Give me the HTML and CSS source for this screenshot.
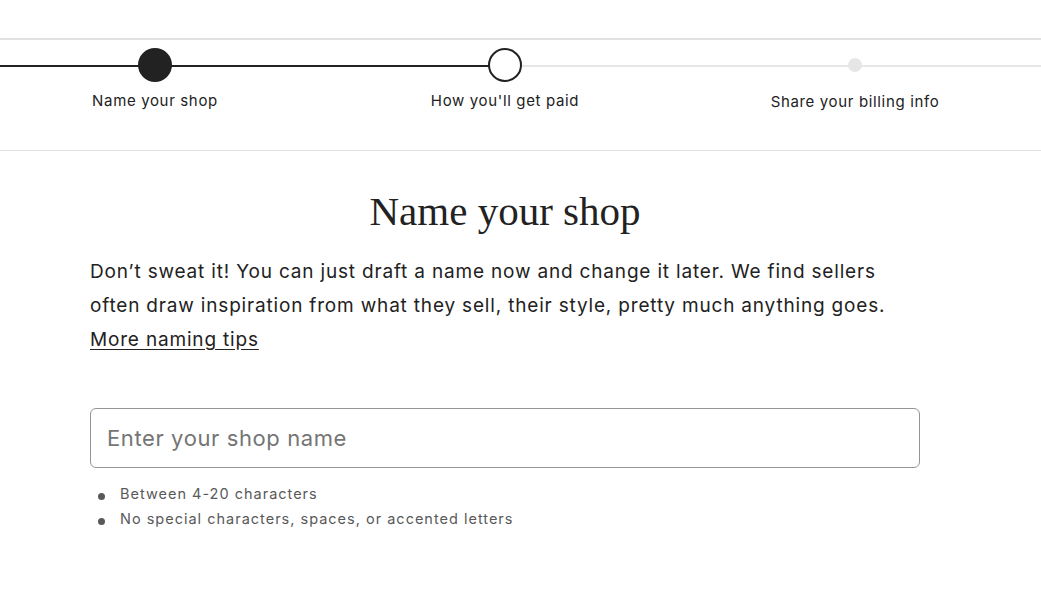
FILE: index.html
```html
<!DOCTYPE html>
<html lang="en">

<head>
	<meta charset="UTF-8">
	<title>Name your shop</title>
	<link rel="stylesheet" href="styles.css">
</head>

<body>
	<div class="progress">
		<ul class="steps">
			<li class="step done">
				<span class="marker"></span>
				<span class="step-label">Name your shop</span>
			</li>
			<li class="step current">
				<span class="marker"></span>
				<span class="step-label">How you'll get paid</span>
			</li>
			<li class="step todo">
				<span class="marker"></span>
				<span class="step-label">Share your billing info</span>
			</li>
		</ul>
	</div>

	<div class="content">
		<h1 class="title">Name your shop</h1>
		<p class="intro">
			Don’t sweat it! You can just draft a name now and change it later. We find sellers
			often draw inspiration from what they sell, their style, pretty much anything goes.
			<br><a class="tips" href="javascript:void(0)">More naming tips</a>
		</p>
		<input class="shop-input" type="text" placeholder="Enter your shop name">
		<ul class="rules">
			<li>Between 4-20 characters</li>
			<li>No special characters, spaces, or accented letters</li>
		</ul>
	</div>
</body>

</html>
```

FILE: styles.css
```css
* {
	margin: 0;
	padding: 0;
	box-sizing: border-box;
}

li {
	list-style: none;
}

a {
	color: inherit;
}

body {
	background: #fff;
	color: #222;
	font-family: "Inter", "Liberation Sans", sans-serif;
}

.progress {
	margin-top: 38px;
	border-top: 2px solid #e1e1e1;
	border-bottom: 1px solid #e1e1e1;
	height: 113px;
	overflow: hidden;
	/* track: done part dark, rest light */
	background: linear-gradient(to right, #222 0, #222 490px, #e6e6e6 490px, #e6e6e6 100%) no-repeat 0 25px / 100% 2px;
}

.steps {
	display: flex;
	width: 1050px;
	margin: 8px 0 0 -20px;
}

.step {
	flex: 1;
	display: flex;
	flex-direction: column;
	align-items: center;
}

.marker {
	display: block;
	width: 34px;
	height: 34px;
	border-radius: 50%;
}

.done .marker {
	background: #222;
}

.current .marker {
	background: #fff;
	border: 2px solid #222;
}

.todo .marker {
	width: 14px;
	height: 14px;
	margin: 10px 0;
	background: #e6e6e6;
}

.step-label {
	margin-top: 9px;
	font-size: 15px;
	line-height: 20px;
	letter-spacing: 0.65px;
	color: #222;
}

.todo .step-label {
	margin-top: 10px;
}

.content {
	width: 830px;
	margin: 0 0 0 90px;
	padding-top: 36px;
}

.title {
	text-align: center;
	font-family: "Liberation Serif", serif;
	font-weight: normal;
	font-size: 41px;
	line-height: 48px;
	color: #222;
}

.intro {
	margin-top: 20px;
	font-size: 19px;
	line-height: 34px;
	letter-spacing: 0.82px;
	color: #222;
}

.tips {
	text-decoration: underline;
	text-underline-offset: 3px;
}

.shop-input {
	display: block;
	width: 100%;
	height: 60px;
	margin-top: 51px;
	padding: 0 16px;
	border: 1px solid #959595;
	border-radius: 6px;
	font-family: inherit;
	font-size: 22px;
	letter-spacing: 0.6px;
	color: #222;
}

.shop-input::placeholder {
	color: #757575;
}

.rules {
	margin-top: 13px;
	font-size: 14.5px;
	line-height: 25px;
	letter-spacing: 1px;
	color: #595959;
}

.rules li {
	position: relative;
	padding-left: 30px;
}

.rules li:before {
	content: "";
	position: absolute;
	left: 8px;
	top: 12px;
	width: 7px;
	height: 7px;
	border-radius: 50%;
	background: #595959;
}
```
